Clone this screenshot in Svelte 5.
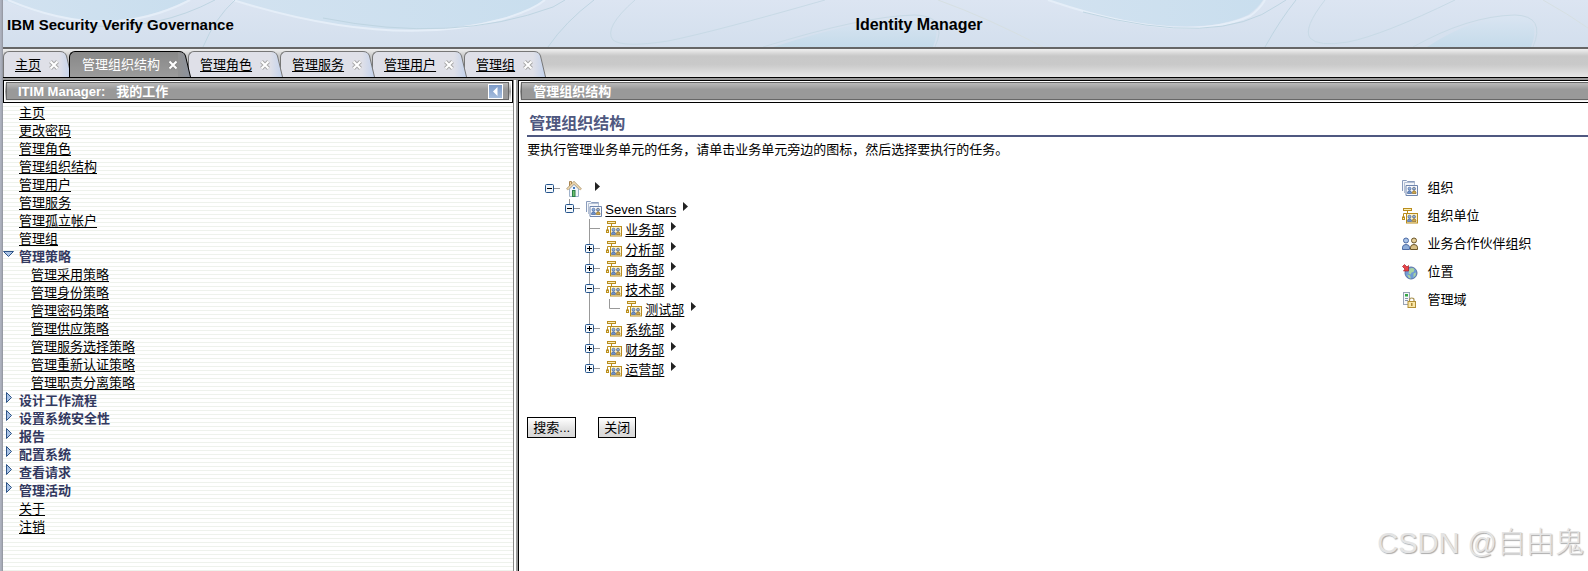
<script lang="ts">
    type Node = {
        label: string;
        icon: string;
        depth: number;
        toggle?: "plus" | "minus";
        lines: string;
        ariaLabel?: string;
    };

    let activeTab = $state("管理组织结构");
    const tabs = ["主页", "管理组织结构", "管理角色", "管理服务", "管理用户", "管理组"];

    const links = [
        "主页",
        "更改密码",
        "管理角色",
        "管理组织结构",
        "管理用户",
        "管理服务",
        "管理孤立帐户",
        "管理组",
    ];

    let groups = $state([
        {
            label: "管理策略",
            open: true,
            items: [
                "管理采用策略",
                "管理身份策略",
                "管理密码策略",
                "管理供应策略",
                "管理服务选择策略",
                "管理重新认证策略",
                "管理职责分离策略",
            ],
        },
        { label: "设计工作流程", open: false, items: [] },
        { label: "设置系统安全性", open: false, items: [] },
        { label: "报告", open: false, items: [] },
        { label: "配置系统", open: false, items: [] },
        { label: "查看请求", open: false, items: [] },
        { label: "管理活动", open: false, items: [] },
    ]);

    const footerLinks = ["关于", "注销"];

    // lines: connector path drawn behind the toggle, in a 21x20 box
    const nodes: Node[] = [
        { label: "", icon: "home", depth: 0, toggle: "minus", lines: "M9 9.5H15", ariaLabel: "主页" },
        { label: "Seven Stars", icon: "org", depth: 1, toggle: "minus", lines: "M4.5 0V6M9 9.5H15" },
        { label: "业务部", icon: "unit", depth: 2, lines: "M4.5 0V20M4.5 9.5H15" },
        { label: "分析部", icon: "unit", depth: 2, toggle: "plus", lines: "M4.5 0V20M9 9.5H15" },
        { label: "商务部", icon: "unit", depth: 2, toggle: "plus", lines: "M4.5 0V20M9 9.5H15" },
        { label: "技术部", icon: "unit", depth: 2, toggle: "minus", lines: "M4.5 0V20M9 9.5H15" },
        { label: "测试部", icon: "unit", depth: 3, lines: "M-15.5 0V20M4.5 0V9.5H15" },
        { label: "系统部", icon: "unit", depth: 2, toggle: "plus", lines: "M4.5 0V20M9 9.5H15" },
        { label: "财务部", icon: "unit", depth: 2, toggle: "plus", lines: "M4.5 0V20M9 9.5H15" },
        { label: "运营部", icon: "unit", depth: 2, toggle: "plus", lines: "M4.5 0V9M9 9.5H15" },
    ];

    const legend = [
        { icon: "org", label: "组织" },
        { icon: "unit", label: "组织单位" },
        { icon: "partner", label: "业务合作伙伴组织" },
        { icon: "location", label: "位置" },
        { icon: "domain", label: "管理域" },
    ];
</script>

{#snippet people()}
    <circle cx="7.5" cy="8.7" r="1.5" fill="#8fb0dc" stroke="#36548f" stroke-width=".6" />
    <path d="M5.5 13.5v-1q.2-1.700 2-1.700t2 1.700v1z" fill="#6f93c8" stroke="#36548f" stroke-width=".6" />
    <circle cx="12" cy="8.7" r="1.5" fill="#8fb0dc" stroke="#4a4a52" stroke-width=".6" />
    <path d="M10.3 13.5v-1q.2-1.700 1.800-1.700t1.900 1.700v1z" fill="#cfa74c" stroke="#7a5a18" stroke-width=".6" />
{/snippet}

{#snippet icon(name: string)}
    <svg class="icon" width="16" height="16" viewBox="0 0 16 16" aria-hidden="true">
        {#if name === "home"}
            <path d="M3.500 8v7.500h9V8L8 3.500z" fill="#f2f6fb" stroke="#9fb2cb" />
            <path d="M3.500 6V.5h2V4" fill="#f2cf9a" stroke="#a98552" />
            <path d="M1 8.500 8 1.500l7 7" fill="none" stroke="#a58a5c" stroke-width="2.200" />
            <path d="M1.300 8.300 8 1.600l6.700 6.700" fill="none" stroke="#f7e3bd" stroke-width="1.200" />
            <rect x="7" y="6" width="2" height="2" fill="#3e78c2" />
            <rect x="6.500" y="9.500" width="2.500" height="6" fill="#6fbf6a" stroke="#2b7f4b" />
        {:else if name === "org"}
            <path d="M.5 11V.5h4l1 1h7v3" fill="#f3f6fa" stroke="#8a9cbc" />
            <path d="M2.500 13V2.500h10v2" fill="none" stroke="#b4c0d4" />
            <path d="M4 15.500V5.500h11.500v10z" fill="#f8fafd" stroke="#6f85ad" />
            {@render people()}
        {:else if name === "unit"}
            <rect x="1.500" y=".5" width="8" height="2" fill="#fbeeb5" stroke="#b98d1e" />
            <path d="M5.500 3v2.500M1.500 9V5.500h4" fill="none" stroke="#b98d1e" />
            <rect x=".5" y="9" width="2" height="2.500" fill="#fbeeb5" stroke="#b98d1e" />
            <rect x="4.500" y="5.500" width="11" height="9.500" fill="#fdf4cf" stroke="#b98d1e" />
            {@render people()}
        {:else if name === "partner"}
            <circle cx="4" cy="4.500" r="2.500" fill="#a9c3e8" stroke="#4c6aa3" />
            <path d="M.5 13.500v-2.300Q.7 8.500 4 8.500t3.500 2.700v2.300z" fill="#8eadd9" stroke="#4c6aa3" />
            <circle cx="12" cy="4.500" r="2.500" fill="#e6d09b" stroke="#6b5528" />
            <path d="M8.500 13.500v-2.300q.2-2.700 3.500-2.700t3.500 2.700v2.300z" fill="#d8bf85" stroke="#6b5528" />
        {:else if name === "location"}
            <circle cx="9" cy="9" r="6" fill="#6f9bd6" stroke="#5a74a6" />
            <path d="M7.500 5q3-2 5 .5l-1 2.500-2 .5-1 2-2-1zM5 10.500l3 1 1 3-2-.5zM11.500 9.500l2.500-1-.5 3-2 2z" fill="#a9d3a0" />
            <path d="M.5 2.500 2.500.5 5 3l1.500-1.500V7H1.500L3 5z" fill="#e8454a" stroke="#a51e25" stroke-width=".7" />
        {:else}
            <rect x="1.500" y=".5" width="6" height="12" fill="#f5f6f9" stroke="#98a3b5" />
            <rect x="3" y="2" width="3" height="2.500" fill="#35a746" />
            <path d="M3 6.500h3M3 8.500h3" stroke="#8794ab" />
            <path d="M7.500 9.500V8q0-2 2.300-2t2.200 2v1.500" fill="none" stroke="#a7904f" stroke-width="1.200" />
            <rect x="6" y="9.500" width="7.500" height="6" fill="#fae7a8" stroke="#b18f38" />
            <path d="M9.800 11v3" stroke="#a07a24" stroke-width="1.300" />
        {/if}
    </svg>
{/snippet}

<div class="app">
    <header class="banner">
        <svg class="banner-art" viewBox="0 0 1585 47" preserveAspectRatio="none" aria-hidden="true">
            <defs>
                <linearGradient id="sky" x1="0" y1="0" x2="0" y2="1">
                    <stop offset="0" stop-color="#dce5f2" />
                    <stop offset="1" stop-color="#d3dfed" />
                </linearGradient>
                <linearGradient id="pool" x1="0" y1="0" x2="1" y2="0">
                    <stop offset="0" stop-color="#d2e2f0" />
                    <stop offset="1" stop-color="#c9deee" />
                </linearGradient>
                <linearGradient id="hill" x1="0" y1="0" x2="0" y2="1">
                    <stop offset="0" stop-color="#dae5f2" />
                    <stop offset="1" stop-color="#c5dbea" />
                </linearGradient>
            </defs>
            <rect width="1585" height="47" fill="url(#sky)" />
            <g fill="url(#pool)">
                <path d="M0 0Q100 42 185 0z" />
                <path d="M230 0Q390 48 500 18 530 10 540 0z" />
                <path d="M1045 0Q1180 44 1245 15 1255 8 1260 0z" />
            </g>
            <g fill="none" stroke="#e5eef8" stroke-width="2">
                <path d="M5 0Q105 43 187 0" />
                <path d="M230 0Q390 50 500 19 530 10 542 0" />
                <path d="M1045 0Q1180 46 1247 16 1257 9 1262 0" />
            </g>
            <g fill="none" stroke="#bfd5e2">
                <path d="M90 26Q155 30 212 0" />
                <path d="M232 0Q212 18 200 47" />
                <path d="M320 18Q450 44 550 7L562 0" />
                <path d="M591 0Q562 22 545 47" />
                <path d="M1080 12Q1215 48 1275 5L1283 0" />
                <path d="M1293 0Q1277 20 1262 47" />
            </g>
            <g fill="url(#hill)">
                <path d="M770 47Q860 18 915 16 942 17 930 47z" />
                <path d="M1424 47Q1470 17 1510 15 1540 16 1528 47z" />
            </g>
            <g fill="none" stroke="#c8dae6">
                <path d="M632 0Q600 28 610 40 620 48 665 41 710 32 822 0" />
                <path d="M1322 0Q1300 28 1307 38 1315 47 1345 42 1380 35 1452 0" />
                <path d="M760 47Q860 16 912 15 946 16 932 47" />
                <path d="M1410 47Q1465 16 1512 15 1543 16 1530 47" />
                <path d="M935 0Q985 18 1040 47M1540 0Q1565 14 1585 28" stroke="#d6dfe2" />
            </g>
        </svg>
        <h1>IBM Security Verify Governance</h1>
        <h2>Identity Manager</h2>
    </header>

    <nav class="tabs">
        {#each tabs as tab, i}
            <div class="tab" class:active={tab === activeTab} style="z-index: {tab === activeTab ? 20 : 10 - i}">
                <div class="tab-body">
                    <a href="#tab" onclick={() => (activeTab = tab)}>{tab}</a>
                    <button class="tab-close" aria-label="关闭 {tab}">
                        <svg width="10" height="10" viewBox="0 0 10 10">
                            <path class="outline" d="M1.500 1.500l7 7M8.500 1.500l-7 7" />
                            <path class="cross" d="M1.500 1.500l7 7M8.500 1.500l-7 7" />
                        </svg>
                    </button>
                </div>
                <svg class="tab-cap" width="13" height="26" viewBox="0 0 13 26" aria-hidden="true">
                    <defs>
                        <linearGradient id="cap-{i}">
                            <stop offset="0" stop-color={tab === activeTab ? "#929292" : "#dfe0e8"} />
                            <stop offset="1" stop-color={tab === activeTab ? "#8a909c" : "#c3d2ec"} />
                        </linearGradient>
                    </defs>
                    <path d="M0 .5H1Q6 .5 7.500 5L12.500 26H0z" fill="url(#cap-{i})" />
                    <path class="cap-line" d="M0 .5H1Q6 .5 7.500 5L12.500 26" />
                </svg>
            </div>
        {/each}
    </nav>

    <div class="columns">
        <aside class="sidebar">
            <div class="bar">
                <div class="bar-inner">
                    <span class="bar-title">ITIM Manager:&nbsp;&nbsp; 我的工作</span>
                    <button class="collapse" aria-label="折叠">
                        <svg width="13" height="13" viewBox="0 0 13 13">
                            <path d="M8.500 2v9L4 6.500z" fill="#fff" />
                        </svg>
                    </button>
                </div>
            </div>
            <ul class="menu">
                {#each links as link}
                    <li><a href="#menu">{link}</a></li>
                {/each}
                {#each groups as group}
                    <li>
                        <button class="group" aria-expanded={group.open} onclick={() => (group.open = !group.open)}>
                            <svg width="16" height="18" viewBox="0 0 16 18" aria-hidden="true">
                                {#if group.open}
                                    <path d="M.5 3.500h10l-5 5z" />
                                {:else}
                                    <path d="M3.500.500v10l5-5z" />
                                {/if}
                            </svg>
                            {group.label}
                        </button>
                        {#if group.open}
                            <ul class="submenu">
                                {#each group.items as item}
                                    <li><a href="#menu">{item}</a></li>
                                {/each}
                            </ul>
                        {/if}
                    </li>
                {/each}
                {#each footerLinks as link}
                    <li><a href="#menu">{link}</a></li>
                {/each}
            </ul>
        </aside>
        <div class="divider"></div>
        <main class="content">
            <div class="bar open-right">
                <div class="bar-inner">
                    <span class="bar-title">管理组织结构</span>
                </div>
            </div>
            <div class="panel">
                <h3>管理组织结构</h3>
                <p>要执行管理业务单元的任务，请单击业务单元旁边的图标，然后选择要执行的任务。</p>
                <div class="split">
                    <ul class="tree">
                        {#each nodes as node}
                            <li style="padding-left: {18 + node.depth * 20}px">
                                <svg class="joint" width="21" height="20" viewBox="0 0 21 20" aria-hidden="true">
                                    <path d={node.lines} fill="none" stroke="#999" />
                                    {#if node.toggle}
                                        <rect x=".5" y="5.500" width="8" height="8" rx="1" fill="#f3f7fb" stroke="#24548c" />
                                        <path
                                            d={node.toggle === "plus" ? "M2 9.500h5M4.500 7v5" : "M2 9.500h5"}
                                            stroke="#000"
                                        />
                                    {/if}
                                </svg>
                                {@render icon(node.icon)}
                                {#if node.label}
                                    <a href="#node">{node.label}</a>
                                {:else}
                                    <span class="blank"></span>
                                {/if}
                                <button class="more" aria-label="{node.label || node.ariaLabel} 任务">
                                    <svg width="5" height="9" viewBox="0 0 5 9"><path d="M0 0v9l5-4.500z" fill="#222" /></svg>
                                </button>
                            </li>
                        {/each}
                    </ul>
                    <ul class="legend">
                        {#each legend as entry}
                            <li>{@render icon(entry.icon)}{entry.label}</li>
                        {/each}
                    </ul>
                </div>
                <div class="actions">
                    <button>搜索...</button>
                    <button>关闭</button>
                </div>
            </div>
        </main>
    </div>

    <div class="watermark">CSDN @自由鬼</div>
</div>

<style>
    :global(body) {
        margin: 0;
    }

    .app {
        position: relative;
        display: flex;
        flex-direction: column;
        box-sizing: border-box;
        min-height: 100vh;
        padding-left: 3px;
        overflow: hidden;
        background: linear-gradient(90deg, #b0b5c2 0, #a2a6b2 2px, #8d8f98 3px, #fff 3px);
        color: #000;
        font-family: "Liberation Sans", "Noto Sans CJK SC", sans-serif;
        font-size: 13px;
        line-height: 18px;
    }

    ul {
        margin: 0;
        padding: 0;
        list-style: none;
    }

    a {
        color: #000;
        text-underline-offset: 2px;
    }

    button {
        font: inherit;
        color: inherit;
        cursor: pointer;
    }

    svg {
        display: block;
        flex: none;
    }

    /* banner */
    .banner {
        position: relative;
        display: flex;
        align-items: center;
        height: 47px;
        padding: 0 4px;
        border-bottom: 2px solid #666;
    }

    .banner-art {
        position: absolute;
        inset: 0;
        width: 100%;
        height: 100%;
    }

    .banner h1,
    .banner h2 {
        position: relative;
        flex: 1;
        margin: 3px 0 0;
        font-size: 15px;
        line-height: 20px;
    }

    .banner h2 {
        flex: 0 0 46.2%;
        font-size: 16px;
    }

    /* tabs */
    .tabs {
        display: flex;
        padding-top: 2px;
        border-bottom: 1px solid #000;
        background: linear-gradient(#f0f0f0, #c8c8c8 25%, #c9c9c9 55%, #e6e6e6);
    }

    .tab {
        position: relative;
        display: flex;
        margin-right: -3px;
    }

    .tab-body {
        display: flex;
        align-items: center;
        gap: 8px;
        box-sizing: border-box;
        height: 26px;
        padding-left: 11px;
        border-top: 1px solid #777;
        border-left: 1px solid #777;
        border-top-left-radius: 6px;
        background: #dfe0e8;
    }

    .active .tab-body {
        padding-left: 12px;
        border-color: #000;
        background: linear-gradient(#888, #9b9b9b);
    }

    .tab-close {
        padding: 0;
        border: 0;
        background: none;
    }

    .outline {
        stroke: #aaa;
        stroke-width: 4;
    }

    .cross {
        stroke: #fff;
        stroke-width: 2;
    }

    .cap-line {
        fill: none;
        stroke: #777;
    }

    .active a {
        color: #fff;
        text-decoration: none;
    }

    .active .outline {
        stroke: #888;
    }

    .active .cap-line {
        stroke: #000;
    }

    /* title bars */
    .columns {
        display: flex;
        flex: 1;
        border-top: 2px solid #999;
    }

    .bar {
        padding: 1px 3px 2px 2px;
        border: 1px solid #000;
        background: linear-gradient(#fff, #999 50%, #fff);
        box-shadow: inset 0 0 0 1px #fff;
    }

    .bar-inner {
        display: flex;
        align-items: center;
        justify-content: space-between;
        height: 16px;
        padding: 0 5px 0 11px;
        border: 1px solid #666;
        background: linear-gradient(#bababa, #999 40%);
    }

    .bar-title {
        margin-top: 2px;
        color: #fff;
        font-weight: bold;
    }

    .open-right {
        padding-right: 0;
        border-right: 0;
        border-left: 0;
    }

    .open-right .bar-inner {
        border-right: 0;
    }

    .collapse {
        padding: 0;
        border: 1px solid #fff;
        background: linear-gradient(#7d9bc8, #a5bddd);
    }

    /* sidebar */
    .sidebar {
        display: flex;
        flex: 0 0 32.2%;
        flex-direction: column;
        min-width: 0;
    }

    .menu {
        flex: 1;
        padding-top: 1px;
        background: repeating-linear-gradient(#fff 0, #fff 3px, #eef2ec 3px, #eef2ec 4px);
    }

    .menu > li > a {
        margin-left: 16px;
    }

    .submenu a {
        margin-left: 28px;
    }

    .group {
        display: flex;
        padding: 0;
        border: 0;
        background: none;
        color: #33395f;
        font-weight: bold;
    }

    .group path {
        fill: #a9c3e6;
        stroke: #2e5487;
    }

    .divider {
        width: 5px;
        background: linear-gradient(90deg, #888 1px, #fff 1px, #fff 3px, #999 3px);
    }

    /* content */
    .content {
        flex: 1;
        min-width: 0;
        border-left: 1px solid #000;
    }

    .panel {
        padding: 11px 0 0 8px;
    }

    h3 {
        margin: 0;
        padding: 0 2px 1px;
        border-bottom: 2px solid #4f5880;
        color: #4f5880;
        font-size: 16px;
        line-height: 20px;
    }

    p {
        margin: 4px 0 20px;
    }

    .split {
        display: flex;
    }

    .tree {
        flex: 1;
    }

    .tree li {
        display: flex;
        align-items: center;
        height: 20px;
    }

    .tree a {
        margin: 2px 0 0 3px;
    }

    .blank {
        width: 6px;
    }

    .joint {
        overflow: visible;
    }

    .more {
        align-self: flex-start;
        margin: 3px 0 0 7px;
        padding: 0;
        border: 0;
        background: none;
    }

    .legend {
        flex: 0 0 17.5%;
        margin-top: -5px;
    }

    .legend li {
        display: flex;
        align-items: center;
        gap: 9px;
        height: 28px;
    }

    .actions {
        display: flex;
        gap: 22px;
        margin-top: 38px;
    }

    .actions button {
        padding: 1px 5px 0;
        border: 1px solid #000;
        background: linear-gradient(#fff, #e0e0e0 60%, #d8d8d8);
    }

    .watermark {
        position: absolute;
        right: 4px;
        bottom: 10px;
        color: #e4e4e4;
        font-size: 29px;
        font-weight: 300;
        line-height: 36px;
        text-shadow: 1px 1px 1px #aaa;
    }
</style>
